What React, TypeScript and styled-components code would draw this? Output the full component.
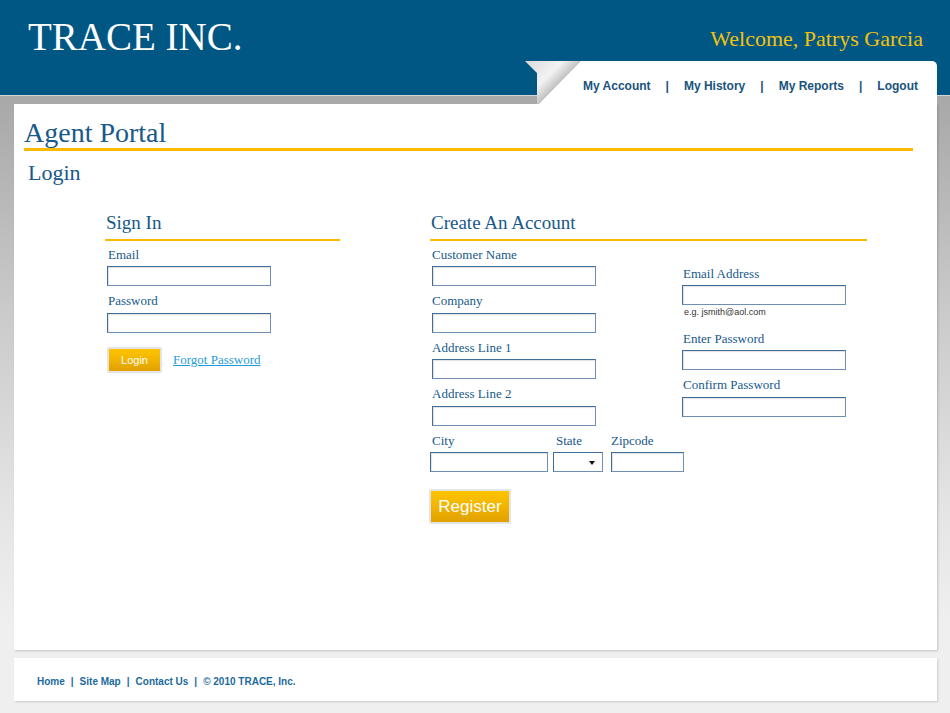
import React from 'react';
import styled, { createGlobalStyle } from 'styled-components';

const GlobalStyle = createGlobalStyle`
  html, body { margin: 0; padding: 0; }
  body {
    background: #efefef;
    font-family: "Liberation Serif", "Times New Roman", serif;
  }
  * { box-sizing: border-box; }
`;

const BLUE = '#015783';
const TEXT = '#17598a';
const GOLD = '#fbb900';

const Page = styled.div`
  width: 950px;
  height: 713px;
  overflow: hidden;
  display: flex;
  flex-direction: column;
`;

const TopBar = styled.div`
  height: 61px;
  background: ${BLUE};
  display: flex;
  justify-content: space-between;
  align-items: flex-start;
  padding: 0 27px 0 28px;
`;

const Logo = styled.div`
  margin-top: 15px;
  font-size: 39px;
  line-height: 44px;
  color: #ffffff;
`;

const Welcome = styled.div`
  margin-top: 25.5px;
  font-size: 22px;
  line-height: 26px;
  color: #f4c20d;
`;

const NavBar = styled.div`
  height: 43px;
  display: flex;
  justify-content: flex-end;
  padding-right: 13px;
  background: linear-gradient(
    to bottom,
    ${BLUE} 0,
    ${BLUE} 34px,
    #d6d6d6 34px,
    #d6d6d6 35px,
    #a9a9a9 35px
  );
`;

const NavTab = styled.nav`
  position: relative;
  width: 400px;
  height: 43px;
  background: #ffffff;
  border-top-right-radius: 5px;
  display: flex;
  align-items: flex-start;
  gap: 15px;
  padding: 18px 0 0 46px;
  &::before {
    content: '';
    position: absolute;
    left: -12px;
    top: 0;
    width: 56px;
    height: 43px;
    clip-path: polygon(0 0, 56px 0, 14px 43px, 12px 43px, 12px 12px);
    background: linear-gradient(135deg, #d9d9d9 0%, #f3f3f3 38%, #b4b4b4 62%, #8f8f8f 100%);
  }
`;

const NavLink = styled.a`
  font-family: "Liberation Sans", Arial, sans-serif;
  font-weight: bold;
  font-size: 12px;
  line-height: 14px;
  color: #19537d;
  text-decoration: none;
`;

const NavSep = styled.span`
  font-family: "Liberation Sans", Arial, sans-serif;
  font-weight: bold;
  font-size: 12px;
  line-height: 14px;
  color: #19537d;
`;

const Main = styled.main`
  flex: 1;
  padding: 0 13px 0 14px;
  background: linear-gradient(to bottom, #a9a9a9 0, #c9c9c9 200px, #e6e6e6 420px, #efefef 520px);
`;

const Panel = styled.section`
  height: 546px;
  background: #ffffff;
  box-shadow: 1px 1px 2px rgba(0, 0, 0, 0.18);
  padding: 14px 24px 0 10px;
`;

const PageTitle = styled.h1`
  margin: 0;
  font-weight: normal;
  font-size: 28px;
  line-height: 30px;
  color: ${TEXT};
  border-bottom: 3px solid ${GOLD};
`;

const SubTitle = styled.h2`
  margin: 9px 0 0 4px;
  font-weight: normal;
  font-size: 22px;
  line-height: 26px;
  color: ${TEXT};
`;

const Columns = styled.div`
  display: flex;
  gap: 90px;
  margin-top: 26px;
  padding-left: 81px;
`;

const Column = styled.div<{ $w: number }>`
  width: ${p => p.$w}px;
`;

const SectionTitle = styled.h3`
  margin: 0 0 6px;
  padding: 0 0 4.5px 1px;
  font-weight: normal;
  font-size: 19px;
  line-height: 22px;
  color: ${TEXT};
  border-bottom: 2px solid ${GOLD};
`;

const Field = styled.div<{ $pl?: number }>`
  display: flex;
  flex-direction: column;
  align-items: flex-start;
  margin-bottom: 7px;
  padding-left: ${p => p.$pl ?? 0}px;
`;

const Label = styled.label<{ $pl?: number }>`
  font-size: 13px;
  line-height: 16px;
  color: ${TEXT};
  padding-left: ${p => p.$pl ?? 0}px;
`;

const TextInput = styled.input<{ $w?: number }>`
  margin-top: 3.5px;
  width: ${p => p.$w ?? 164}px;
  height: 20px;
  border: 1px solid #3f6c98;
  border-right-color: #6f90b3;
  border-bottom-color: #6f90b3;
  box-shadow: inset 1px 1px 1px rgba(0, 0, 0, 0.12);
  background: #fff;
  padding: 0 3px;
  font-size: 12px;
  outline: none;
`;

const SelectWrap = styled.div`
  position: relative;
  margin-top: 3.5px;
  width: 50px;
  height: 20px;
  &::after {
    content: '';
    position: absolute;
    right: 8px;
    top: 9px;
    border-left: 3.5px solid transparent;
    border-right: 3.5px solid transparent;
    border-top: 4px solid #111;
    pointer-events: none;
  }
`;

const Select = styled.select`
  appearance: none;
  -webkit-appearance: none;
  width: 50px;
  height: 20px;
  border: 1px solid #3f6c98;
  border-right-color: #6f90b3;
  border-bottom-color: #6f90b3;
  background: #fff;
  border-radius: 0;
  outline: none;
`;

const Hint = styled.div`
  margin: 1.5px 0 6px 2px;
  font-family: "Liberation Sans", Arial, sans-serif;
  font-size: 9px;
  line-height: 11px;
  color: #333;
`;

const ActionRow = styled.div`
  display: flex;
  align-items: center;
  gap: 11px;
  margin-top: 14px;
  padding-left: 2px;
`;

const GoldButton = styled.button<{ $big?: boolean }>`
  width: ${p => (p.$big ? 82 : 55)}px;
  height: ${p => (p.$big ? 35 : 26)}px;
  border: 2px solid #e4e4e4;
  border-radius: 2px;
  padding: 0;
  background: linear-gradient(to bottom, #fdc400 0%, #f2b400 50%, #e0a000 100%);
  background-clip: padding-box;
  color: #ffffff;
  font-family: "Liberation Sans", Arial, sans-serif;
  font-size: ${p => (p.$big ? 17 : 11)}px;
  cursor: pointer;
`;

const ForgotLink = styled.a`
  font-size: 13px;
  line-height: 16px;
  color: #1f9bdb;
  text-decoration: underline;
`;

const AccountGrid = styled.div`
  display: grid;
  grid-template-columns: 252px 1fr;
`;

const SubCol = styled.div<{ $mt?: number }>`
  margin-top: ${p => p.$mt ?? 0}px;
`;

const CityRow = styled.div`
  grid-column: 1 / span 2;
  display: flex;
  align-items: flex-start;
`;

const RegisterRow = styled.div`
  margin-top: 10px;
  margin-left: -1px;
`;

const Footer = styled.footer`
  margin-top: 8px;
  height: 43px;
  background: #ffffff;
  box-shadow: 1px 1px 2px rgba(0, 0, 0, 0.15);
  display: flex;
  align-items: center;
  gap: 6px;
  padding: 4px 0 0 23px;
`;

const FootLink = styled.a`
  font-family: "Liberation Sans", Arial, sans-serif;
  font-weight: bold;
  font-size: 10px;
  line-height: 13px;
  color: #1c6a9b;
  text-decoration: none;
`;

const FootSep = styled.span`
  font-family: "Liberation Sans", Arial, sans-serif;
  font-weight: bold;
  font-size: 10px;
  line-height: 13px;
  color: #1c6a9b;
`;

export default function App() {
  const nav = ['My Account', 'My History', 'My Reports', 'Logout'];
  const foot = ['Home', 'Site Map', 'Contact Us', '© 2010 TRACE, Inc.'];
  return (
    <>
      <GlobalStyle />
      <Page>
        <header>
          <TopBar>
            <Logo>TRACE INC.</Logo>
            <Welcome>Welcome, Patrys Garcia</Welcome>
          </TopBar>
          <NavBar>
            <NavTab>
              {nav.map((n, i) => (
                <React.Fragment key={n}>
                  {i > 0 && <NavSep>|</NavSep>}
                  <NavLink href="#">{n}</NavLink>
                </React.Fragment>
              ))}
            </NavTab>
          </NavBar>
        </header>
        <Main>
          <Panel>
            <PageTitle>Agent Portal</PageTitle>
            <SubTitle>Login</SubTitle>
            <Columns>
              <Column $w={235}>
                <SectionTitle>Sign In</SectionTitle>
                <Field $pl={2}>
                  <Label $pl={1}>Email</Label>
                  <TextInput />
                </Field>
                <Field $pl={2}>
                  <Label $pl={1}>Password</Label>
                  <TextInput type="password" />
                </Field>
                <ActionRow>
                  <GoldButton>Login</GoldButton>
                  <ForgotLink href="#">Forgot Password</ForgotLink>
                </ActionRow>
              </Column>
              <Column $w={437}>
                <SectionTitle>Create An Account</SectionTitle>
                <AccountGrid>
                  <SubCol>
                    <Field $pl={2}>
                      <Label>Customer Name</Label>
                      <TextInput />
                    </Field>
                    <Field $pl={2}>
                      <Label>Company</Label>
                      <TextInput />
                    </Field>
                    <Field $pl={2}>
                      <Label>Address Line 1</Label>
                      <TextInput />
                    </Field>
                    <Field $pl={2}>
                      <Label>Address Line 2</Label>
                      <TextInput />
                    </Field>
                  </SubCol>
                  <SubCol $mt={19}>
                    <Field>
                      <Label $pl={1}>Email Address</Label>
                      <TextInput />
                      <Hint>e.g. jsmith@aol.com</Hint>
                    </Field>
                    <Field>
                      <Label $pl={1}>Enter Password</Label>
                      <TextInput type="password" />
                    </Field>
                    <Field>
                      <Label $pl={1}>Confirm Password</Label>
                      <TextInput type="password" />
                    </Field>
                  </SubCol>
                  <CityRow>
                    <Field>
                      <Label $pl={2}>City</Label>
                      <TextInput $w={118} />
                    </Field>
                    <Field $pl={5}>
                      <Label $pl={3}>State</Label>
                      <SelectWrap>
                        <Select defaultValue="">
                          <option value=""></option>
                        </Select>
                      </SelectWrap>
                    </Field>
                    <Field $pl={8}>
                      <Label>Zipcode</Label>
                      <TextInput $w={73} />
                    </Field>
                  </CityRow>
                </AccountGrid>
                <RegisterRow>
                  <GoldButton $big>Register</GoldButton>
                </RegisterRow>
              </Column>
            </Columns>
          </Panel>
          <Footer>
            {foot.map((f, i) => (
              <React.Fragment key={f}>
                {i > 0 && <FootSep>|</FootSep>}
                <FootLink href="#">{f}</FootLink>
              </React.Fragment>
            ))}
          </Footer>
        </Main>
      </Page>
    </>
  );
}
